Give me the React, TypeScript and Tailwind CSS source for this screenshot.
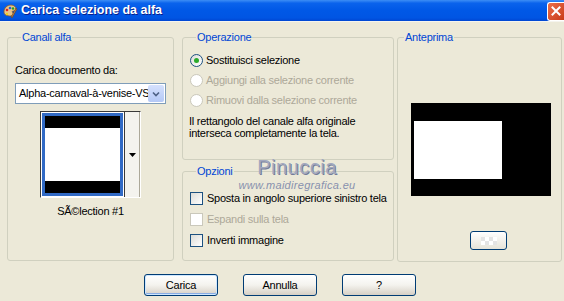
import React from 'react';

const font = "font-['Liberation_Sans',Arial,sans-serif]";

const AppIcon = () => (
  <svg width="16" height="16" viewBox="0 0 16 16">
    <path d="M2 9c0-4 3-7 7-7 3 0 5 2 5 4 0 2-2 2-3 2-1 0-1 1 0 2 1 1 0 3-2 3-4 0-7-1-7-4z" fill="#E8C48A" stroke="#8A5A2A" strokeWidth="0.8" />
    <circle cx="5" cy="7" r="1.3" fill="#E02020" />
    <circle cx="8" cy="5" r="1.3" fill="#2060E0" />
    <circle cx="11" cy="5.5" r="1.2" fill="#20A020" />
    <circle cx="5" cy="11" r="1.2" fill="#F0D020" />
    <path d="M9 14l5-9 1 1-5 9z" fill="#C08040" stroke="#5A3A1A" strokeWidth="0.5" />
  </svg>
);

const Radio = ({ checked, disabled, label }: { checked?: boolean; disabled?: boolean; label: string }) => (
  <div className="flex items-center h-[20px] gap-[3px] whitespace-nowrap">
    <span
      className={
        disabled
          ? 'flex items-center justify-center w-[13px] h-[13px] rounded-full border border-[#CAC8BB] bg-white'
          : 'flex items-center justify-center w-[13px] h-[13px] rounded-full border border-[#1C5180] bg-gradient-to-br from-[#DCDCD7] to-white'
      }
    >
      {checked && <span className="w-[5px] h-[5px] rounded-full bg-[#2AAA2A]" />}
    </span>
    <span className={disabled ? 'text-[#ACA899]' : 'text-black'}>{label}</span>
  </div>
);

const Check = ({ disabled, label }: { disabled?: boolean; label: string }) => (
  <div className="flex items-center h-[21px] gap-[4px] whitespace-nowrap">
    <span
      className={
        disabled
          ? 'w-[13px] h-[13px] border border-[#CAC8BB] bg-white'
          : 'w-[13px] h-[13px] border border-[#1C5180] bg-gradient-to-br from-[#DCDCD7] to-white'
      }
    />
    <span className={disabled ? 'text-[#ACA899]' : 'text-black'}>{label}</span>
  </div>
);

const Group = ({ title, className, children }: { title: string; className: string; children?: React.ReactNode }) => (
  <fieldset className={`border border-[#D0D0BF] rounded-[3px] ${className}`}>
    <legend className="ml-[6px] px-[1px] text-[#0046D5] leading-[13px]">{title}</legend>
    {children}
  </fieldset>
);

const XpButton = ({ label, primary }: { label: string; primary?: boolean }) => (
  <button
    className={
      primary
        ? 'w-[74px] h-[22px] rounded-[3px] border border-[#003C74] bg-gradient-to-b from-white via-[#F4F3EE] to-[#D6D0C5] shadow-[inset_0_0_0_1px_#CEE7FF,inset_0_-1px_0_1px_#89ADE4] text-black'
        : 'w-[74px] h-[22px] rounded-[3px] border border-[#003C74] bg-gradient-to-b from-white via-[#F4F3EE] to-[#D6D0C5] text-black'
    }
  >
    {label}
  </button>
);

export default function App() {
  return (
    <div className={`w-[564px] h-[301px] bg-[#ECE9D8] flex flex-col text-[11px] leading-[13px] tracking-[-0.25px] text-black ${font}`}>
      <div className="h-[22px] flex items-center bg-[linear-gradient(to_bottom,#3D8EF5_0%,#0A63EC_15%,#0058E6_50%,#0055E3_85%,#0046D2_100%)] border-b border-[#F5F4EE]">
        <div className="ml-[2px] mt-[1px]">
          <AppIcon />
        </div>
        <span className="ml-[3px] text-white font-bold text-[12.5px] tracking-normal [text-shadow:1px_1px_0_#0A1E8C]">Carica selezione da alfa</span>
        <div className="ml-auto mt-[1px] w-[17px] h-[19px] rounded-l-[3px] border border-r-0 border-white bg-gradient-to-br from-[#EC6E48] to-[#C83A18] flex items-center justify-center">
          <svg width="10" height="10" viewBox="0 0 10 10">
            <path d="M1.5 1.5l7 7M8.5 1.5l-7 7" stroke="white" strokeWidth="2" strokeLinecap="square" />
          </svg>
        </div>
      </div>

      <div className="flex pt-[9px] pl-[7px]">
        <Group title="Canali alfa" className="w-[166px] h-[230px] px-[7px]">
          <div className="mt-[20px]">Carica documento da:</div>
          <div className="mt-[6px] w-[151px] h-[21px] border border-[#7F9DB9] bg-white flex items-center">
            <span className="flex-1 overflow-hidden whitespace-nowrap pl-[3px]">Alpha-carnaval-à-venise-VS</span>
            <span className="w-[16px] h-[17px] mr-[1px] rounded-[2px] bg-gradient-to-b from-[#D5E1FD] to-[#B4C8F6] flex items-center justify-center">
              <svg width="8" height="6" viewBox="0 0 8 6">
                <path d="M1 1.5l3 3 3-3" stroke="#4D6185" strokeWidth="1.6" fill="none" />
              </svg>
            </span>
          </div>
          <div className="mx-auto mt-[7px] flex w-[101px] h-[87px] border border-t-[#3A3A3A] border-l-[#3A3A3A] border-b-white border-r-white">
            <div className="w-[83px] h-full bg-white p-[1px]">
              <div className="h-full border-[3px] border-[#316AC5] flex flex-col">
                <div className="h-[12px] bg-black" />
                <div className="flex-1 bg-white" />
                <div className="h-[12px] bg-black" />
              </div>
            </div>
            <div className="flex-1 bg-[#F4F3EE] border-l border-r border-l-[#3A3A3A] border-r-[#ACA899] flex items-center justify-center">
              <svg width="7" height="4" viewBox="0 0 7 4">
                <path d="M0 0h7L3.5 4z" fill="black" />
              </svg>
            </div>
          </div>
          <div className="mt-[7px] text-center">SÃ©lection #1</div>
        </Group>

        <div className="relative ml-[8px] w-[212px] flex flex-col">
          <Group title="Operazione" className="h-[129px] pl-[7px]">
            <div className="mt-[6px]">
              <Radio checked label="Sostituisci selezione" />
              <Radio disabled label="Aggiungi alla selezione corrente" />
              <Radio disabled label="Rimuovi dalla selezione corrente" />
            </div>
            <p className="mt-[5px] -ml-[1px] leading-[12px]">
              Il rettangolo del canale alfa originale
              <br />
              interseca completamente la tela.
            </p>
          </Group>
          <Group title="Opzioni" className="mt-[5px] h-[96px] pl-[7px]">
            <div className="mt-[10px]">
              <Check label="Sposta in angolo superiore sinistro tela" />
              <Check disabled label="Espandi sulla tela" />
              <Check label="Inverti immagine" />
            </div>
          </Group>
          <div className="absolute left-[55px] top-[126px] w-[120px] flex flex-col items-center pointer-events-none tracking-normal">
            <span className="text-[20px] leading-[20px] tracking-[0.5px] text-[#A2A8BE] [text-shadow:1px_1px_0_#737C98]">Pinuccia</span>
            <span className="mt-[3px] text-[11px] leading-[11px] italic tracking-[0.3px] text-[#8891AE]">www.maidiregrafica.eu</span>
          </div>
        </div>

        <Group title="Anteprima" className="ml-[3px] w-[165px] h-[231px]">
          <div className="mt-[59px] ml-[13px] w-[140px] h-[93px] bg-black pt-[18px] pl-[3px]">
            <div className="w-[88px] h-[58px] bg-white" />
          </div>
          <button className="mt-[35px] ml-[72px] w-[37px] h-[19px] rounded-[3px] border border-[#003C74] bg-gradient-to-b from-white to-[#E6E3D8] flex items-center justify-center">
            <span className="grid grid-cols-4 w-[16px] h-[8px]">
              <span className="bg-[#E4E4E4]" />
              <span className="bg-white" />
              <span className="bg-[#E4E4E4]" />
              <span className="bg-white" />
              <span className="bg-white" />
              <span className="bg-[#E4E4E4]" />
              <span className="bg-white" />
              <span className="bg-[#E4E4E4]" />
            </span>
          </button>
        </Group>
      </div>

      <div className="flex gap-[25px] pl-[144px] mt-[12px]">
        <XpButton primary label="Carica" />
        <XpButton label="Annulla" />
        <XpButton label="?" />
      </div>
    </div>
  );
}
